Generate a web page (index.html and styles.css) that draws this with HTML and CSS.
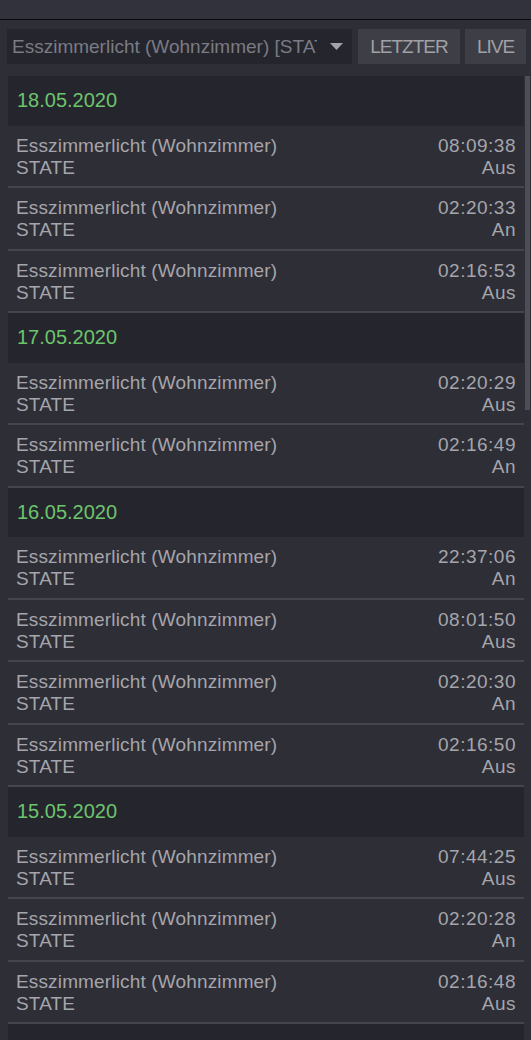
FILE: index.html
```html
<!DOCTYPE html>
<html lang="de">
<head>
<meta charset="utf-8">
<link rel="stylesheet" href="styles.css">
</head>
<body>
<div class="topbar"></div>
<div class="main">
  <div class="toolbar">
    <div class="select">
      <span class="select-text">Esszimmerlicht (Wohnzimmer) [STATE]</span>
      <svg class="caret" width="13" height="7" viewBox="0 0 13 7"><path d="M0 0H13L6.5 7Z" fill="#a3a3a9"/></svg>
    </div>
    <div class="btn btn-last">LETZTER</div>
    <div class="btn btn-live">LIVE</div>
  </div>
  <div class="content">
    <div class="list">
      <div class="day">18.05.2020</div>
      <div class="row"><div class="l"><div>Esszimmerlicht (Wohnzimmer)</div><div>STATE</div></div><div class="r"><div>08:09:38</div><div>Aus</div></div></div>
      <div class="row"><div class="l"><div>Esszimmerlicht (Wohnzimmer)</div><div>STATE</div></div><div class="r"><div>02:20:33</div><div>An</div></div></div>
      <div class="row"><div class="l"><div>Esszimmerlicht (Wohnzimmer)</div><div>STATE</div></div><div class="r"><div>02:16:53</div><div>Aus</div></div></div>
      <div class="day">17.05.2020</div>
      <div class="row"><div class="l"><div>Esszimmerlicht (Wohnzimmer)</div><div>STATE</div></div><div class="r"><div>02:20:29</div><div>Aus</div></div></div>
      <div class="row"><div class="l"><div>Esszimmerlicht (Wohnzimmer)</div><div>STATE</div></div><div class="r"><div>02:16:49</div><div>An</div></div></div>
      <div class="day">16.05.2020</div>
      <div class="row"><div class="l"><div>Esszimmerlicht (Wohnzimmer)</div><div>STATE</div></div><div class="r"><div>22:37:06</div><div>An</div></div></div>
      <div class="row"><div class="l"><div>Esszimmerlicht (Wohnzimmer)</div><div>STATE</div></div><div class="r"><div>08:01:50</div><div>Aus</div></div></div>
      <div class="row"><div class="l"><div>Esszimmerlicht (Wohnzimmer)</div><div>STATE</div></div><div class="r"><div>02:20:30</div><div>An</div></div></div>
      <div class="row"><div class="l"><div>Esszimmerlicht (Wohnzimmer)</div><div>STATE</div></div><div class="r"><div>02:16:50</div><div>Aus</div></div></div>
      <div class="day">15.05.2020</div>
      <div class="row"><div class="l"><div>Esszimmerlicht (Wohnzimmer)</div><div>STATE</div></div><div class="r"><div>07:44:25</div><div>Aus</div></div></div>
      <div class="row"><div class="l"><div>Esszimmerlicht (Wohnzimmer)</div><div>STATE</div></div><div class="r"><div>02:20:28</div><div>An</div></div></div>
      <div class="row"><div class="l"><div>Esszimmerlicht (Wohnzimmer)</div><div>STATE</div></div><div class="r"><div>02:16:48</div><div>Aus</div></div></div>
      <div class="day"></div>
    </div>
    <div class="scrollbar"><div class="thumb"></div></div>
  </div>
</div>
</body>
</html>
```

FILE: styles.css
```css
html, body {
  margin: 0;
  padding: 0;
  background: #2e2e37;
  height: 1040px;
  overflow: hidden;
  font-family: "Liberation Sans", Arial, sans-serif;
}
.topbar {
  height: 19px;
  background: #32323c;
  border-bottom: 1px solid #0a0a0d;
}
.main {
  padding-top: 9px;
}
.toolbar {
  display: flex;
  height: 35px;
  margin-left: 7px;
}
.select {
  width: 345px;
  background: #25252d;
  display: flex;
  align-items: center;
  overflow: hidden;
}
.select-text {
  color: #7b7b83;
  font-size: 19px;
  white-space: nowrap;
  overflow: hidden;
  text-overflow: clip;
  width: 305px;
  padding-left: 5px;
  flex: none;
}
.caret {
  margin-left: 13px;
  flex: none;
}
.btn {
  background: #3e3e47;
  color: #a0a0a6;
  font-size: 19px;
  letter-spacing: -1px;
  display: flex;
  align-items: center;
  justify-content: center;
}
.btn-last {
  width: 102px;
  margin-left: 6px;
}
.btn-live {
  width: 61px;
  margin-left: 5px;
}
.content {
  display: flex;
  margin-top: 12px;
}
.list {
  margin-left: 8px;
  width: 516px;
  flex: none;
}
.scrollbar {
  width: 5px;
  margin-left: 1px;
  flex: none;
}
.thumb {
  height: 334px;
  background: #4e4e59;
}
.day {
  height: 49.5px;
  background: #25252d;
  color: #6cc46c;
  font-size: 20px;
  line-height: 49px;
  padding-left: 9px;
  box-sizing: border-box;
}
.row {
  height: 62.5px;
  box-sizing: border-box;
  border-bottom: 2px solid #45454f;
  padding: 9px 8px 0 8px;
  display: flex;
  justify-content: space-between;
  color: #a5a5ab;
  font-size: 19px;
  line-height: 22px;
  letter-spacing: 0.15px;
}
.r {
  text-align: right;
  letter-spacing: 0.5px;
}
```
